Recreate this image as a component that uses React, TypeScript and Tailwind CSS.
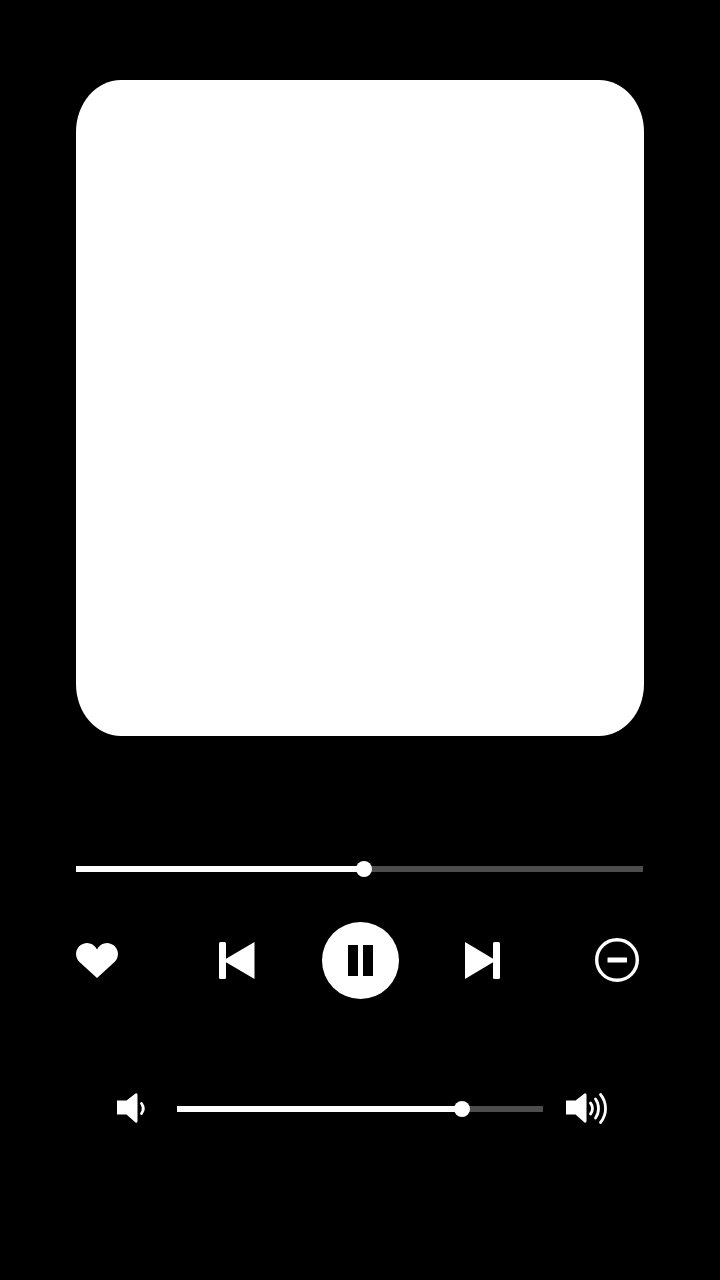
export default function App() {
  return (
    <div className="w-[720px] h-[1280px] bg-black flex flex-col pt-20 pl-[76px]">
      <div className="w-[568px] h-[656px] bg-white rounded-[45px/52px] shrink-0" />

      <div className="mt-[130px] w-[567px] h-[6px] bg-[#4d4d4d] relative">
        <div className="h-full w-[288px] bg-white" />
        <div className="absolute left-[280px] top-[-5px] w-4 h-4 rounded-full bg-white" />
      </div>

      <div className="mt-[49px] h-[78px] flex items-center">
        <svg width="42" height="35" viewBox="0 0 42 35" className="shrink-0">
          <path d="M21 35 L3.2 18.8 A11 11 0 1 1 21 6.4 A11 11 0 1 1 38.8 18.8 Z" fill="#fff" />
        </svg>
        <svg width="36" height="40" viewBox="0 0 36 40" className="shrink-0 ml-[101px]">
          <rect x="0" y="2" width="7" height="37" rx="1.5" fill="#fff" />
          <path d="M35.5 2 V39 L4 20.5 Z" fill="#fff" />
        </svg>
        <div className="shrink-0 ml-[67px] w-[77px] h-[77px] rounded-full bg-white flex items-center justify-center gap-[5px]">
          <div className="w-[10px] h-[31px] bg-black" />
          <div className="w-[10px] h-[31px] bg-black" />
        </div>
        <svg width="35" height="40" viewBox="0 0 35 40" className="shrink-0 ml-[66px]">
          <rect x="28" y="2" width="7" height="37" rx="1.5" fill="#fff" />
          <path d="M0 2 V39 L31 20.5 Z" fill="#fff" />
        </svg>
        <svg width="44" height="44" viewBox="0 0 44 44" className="shrink-0 ml-[95px]">
          <circle cx="22" cy="22" r="20.3" stroke="#fff" strokeWidth="3.4" fill="none" />
          <rect x="12.5" y="19.5" width="19.5" height="5" rx="0.5" fill="#fff" />
        </svg>
      </div>

      <div className="mt-[94px] flex items-center h-[32px]">
        <svg width="28" height="32" viewBox="0 0 28 32" className="shrink-0 ml-[41px] overflow-visible">
          <path d="M0 7.5 H9.5 L18.5 0.5 Q20.5 -0.5 20.5 2 V28 Q20.5 30.5 18.5 29.5 L9.5 21.5 H0 Z" fill="#fff" />
          <path d="M24.5 10.5 A8.6 8.6 0 0 1 24.5 20.5" stroke="#fff" strokeWidth="2.8" fill="none" strokeLinecap="round" />
        </svg>
        <div className="ml-[32px] w-[366px] h-[6px] bg-[#4d4d4d] relative shrink-0">
          <div className="h-full w-[285px] bg-white" />
          <div className="absolute left-[277px] top-[-5px] w-4 h-4 rounded-full bg-white" />
        </div>
        <svg width="42" height="32" viewBox="0 0 42 32" className="shrink-0 ml-[23px] overflow-visible">
          <path d="M0 7.5 H9.5 L18.5 0.5 Q20.5 -0.5 20.5 2 V28 Q20.5 30.5 18.5 29.5 L9.5 21.5 H0 Z" fill="#fff" />
          <path d="M24.5 10 A8.6 8.6 0 0 1 24.5 21" stroke="#fff" strokeWidth="2.8" fill="none" strokeLinecap="round" />
          <path d="M29.5 6 A16.5 16.5 0 0 1 29.5 25" stroke="#fff" strokeWidth="2.8" fill="none" strokeLinecap="round" />
          <path d="M34.5 1.5 A22 22 0 0 1 34.5 29.5" stroke="#fff" strokeWidth="2.8" fill="none" strokeLinecap="round" />
        </svg>
      </div>
    </div>
  );
}
